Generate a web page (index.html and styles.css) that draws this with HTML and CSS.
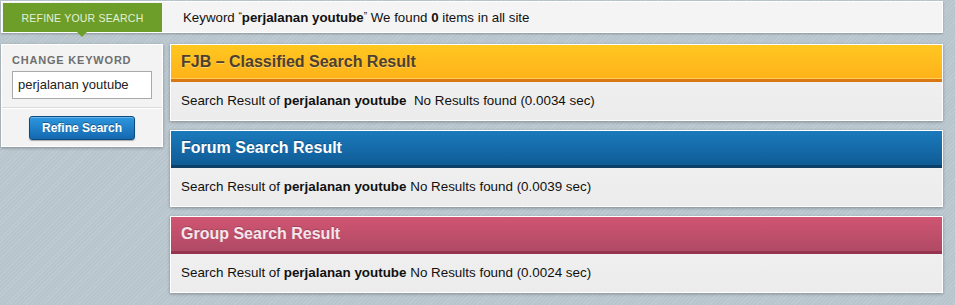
FILE: index.html
```html
<!DOCTYPE html>
<html>
<head>
<meta charset="utf-8">
<link rel="stylesheet" href="styles.css">
</head>
<body>
<div class="page">
  <div class="topbar">
    <div class="tab">REFINE YOUR SEARCH</div>
    <div class="summary">Keyword <span class="q">&ldquo;</span><b>perjalanan youtube</b><span class="q">&rdquo;</span> We found <b>0</b> items in all site</div>
  </div>
  <div class="content">
    <div class="sidebar">
      <div class="side-top">
        <div class="side-label">CHANGE KEYWORD</div>
        <div class="input">perjalanan youtube</div>
      </div>
      <div class="side-bottom">
        <div class="btn">Refine Search</div>
      </div>
    </div>
    <div class="results">
      <div class="panel">
        <div class="head head-fjb">FJB &ndash; Classified Search Result</div>
        <div class="body">Search Result of <b>perjalanan youtube</b>&nbsp; No Results found (0.0034 sec)</div>
      </div>
      <div class="panel">
        <div class="head head-forum">Forum Search Result</div>
        <div class="body">Search Result of <b>perjalanan youtube</b> No Results found (0.0039 sec)</div>
      </div>
      <div class="panel">
        <div class="head head-group">Group Search Result</div>
        <div class="body">Search Result of <b>perjalanan youtube</b> No Results found (0.0024 sec)</div>
      </div>
    </div>
  </div>
</div>
</body>
</html>
```
FILE: styles.css
```css
html, body {
  margin: 0;
  padding: 0;
}
body {
  width: 955px;
  height: 305px;
  overflow: hidden;
  font-family: "Liberation Sans", Arial, sans-serif;
  color: #111;
  background-color: #b8c5cd;
  background-image: repeating-linear-gradient(135deg, rgba(255,255,255,0.10) 0 1px, rgba(0,0,0,0) 1px 3px);
}
.page {
  padding: 1px 0 0 1px;
  width: 942px;
}
.topbar {
  display: flex;
  align-items: center;
  height: 30px;
  background: #f4f4f4;
  border: 1px solid #fff;
  box-shadow: 0 1px 2px rgba(0,0,0,0.25);
  position: relative;
}
.tab {
  position: relative;
  align-self: stretch;
  width: 159px;
  margin-left: 1px;
  margin-top: 1px;
  background: #6d9e2a;
  color: #e6f0d6;
  font-size: 10.5px;
  letter-spacing: 0.2px;
  display: flex;
  align-items: center;
  justify-content: center;
}
.tab::after {
  content: "";
  position: absolute;
  left: 74px;
  bottom: -5px;
  border-left: 5px solid transparent;
  border-right: 5px solid transparent;
  border-top: 5px solid #6d9e2a;
}
.summary {
  margin-left: 21px;
  font-size: 13.3px;
  color: #111;
}
.summary .q {
  font-size: 10px;
  vertical-align: 2px;
}
.content {
  display: flex;
  align-items: flex-start;
  gap: 7px;
  margin-top: 11px;
}
.sidebar {
  width: 160px;
  background: #f3f3f3;
  border: 1px solid #fff;
  box-shadow: 0 1px 3px rgba(0,0,0,0.3);
}
.side-top {
  padding: 9px 10px 8px 10px;
  border-bottom: 1px solid #dcdcdc;
}
.side-label {
  font-size: 11px;
  font-weight: bold;
  color: #6f6f6f;
  letter-spacing: 0.8px;
  margin-bottom: 5px;
}
.input {
  height: 26px;
  border: 1px solid #a9a9a9;
  background: #fff;
  font-size: 13px;
  line-height: 26px;
  padding-left: 5px;
  color: #222;
}
.side-bottom {
  border-top: 1px solid #fff;
  padding: 7px 0 6px;
  display: flex;
  justify-content: center;
}
.btn {
  width: 104px;
  height: 22px;
  border: 1px solid #0b4c80;
  border-radius: 3px;
  background: linear-gradient(#2d97df, #1468b0);
  color: #fff;
  font-size: 12px;
  font-weight: bold;
  text-align: center;
  line-height: 22px;
  text-shadow: 0 -1px 0 rgba(0,0,0,0.35);
  box-shadow: inset 0 1px 0 rgba(255,255,255,0.3), 0 1px 1px rgba(0,0,0,0.3);
}
.results {
  flex: 1;
  display: flex;
  flex-direction: column;
  gap: 9px;
}
.panel {
  border: 1px solid #fff;
  box-shadow: 0 1px 3px rgba(0,0,0,0.3);
  background: linear-gradient(#f2f2f2, #ececec);
}
.head {
  height: 34px;
  line-height: 34px;
  padding-left: 10px;
  font-size: 16px;
  font-weight: bold;
}
.head-fjb {
  background: linear-gradient(#ffc720, #ffb21a);
  border-bottom: 3px solid #d97712;
  box-shadow: inset 0 -1px 0 #ffcf5a;
  color: #4d4030;
  text-shadow: 0 1px 0 rgba(255,255,255,0.35);
}
.head-forum {
  background: linear-gradient(#1b7abc, #0f5c96);
  border-bottom: 3px solid #0e3f66;
  color: #fff;
  text-shadow: 0 -1px 0 rgba(0,0,0,0.3);
}
.head-group {
  background: linear-gradient(#d05572, #b04a65);
  border-bottom: 3px solid #963450;
  color: #f4e6ea;
  text-shadow: 0 -1px 0 rgba(0,0,0,0.2);
}
.body {
  height: 38px;
  line-height: 38px;
  padding-left: 10px;
  font-size: 13.4px;
  color: #111;
}
```
